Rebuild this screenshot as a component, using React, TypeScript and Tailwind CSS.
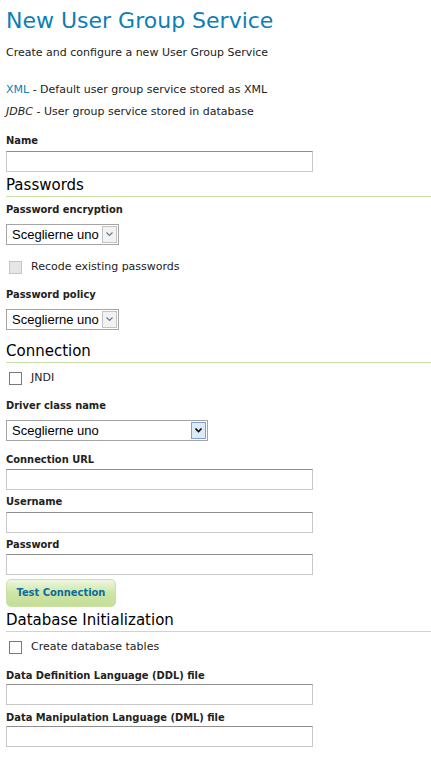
import React from "react";

const font = "font-['DejaVu_Sans',sans-serif]";
const boldFont = "font-['DejaVu_Sans_Condensed','Liberation_Sans',sans-serif]";

const Label = ({ children, className = "" }: { children: React.ReactNode; className?: string }) => (
  <div className={`text-[11px] font-bold text-[#222] leading-[14px] ${boldFont} ${className}`}>{children}</div>
);

const TextInput = ({ className = "" }: { className?: string }) => (
  <div className={`w-[307px] h-[21px] border border-[#c8c8c8] border-t-[#8e8e8e] bg-white ${className}`} />
);

const Select = ({ wide = false, className = "" }: { wide?: boolean; className?: string }) => (
  <div
    className={`flex items-stretch h-[21px] border border-[#a5a5a5] bg-white ${
      wide ? "w-[202px]" : "w-[113px]"
    } ${className}`}
  >
    <span className="flex-1 pl-[5px] text-[13px] leading-[19px] text-black font-['Liberation_Sans',sans-serif]">
      Sceglierne uno
    </span>
    <span
      className={`m-px w-[15px] flex items-center justify-center border ${
        wide ? "border-[#7da2ce] bg-[#dcebfc]" : "border-[#c3c3c3] bg-[#f2f2f2]"
      }`}
    >
      <svg width="7" height="5" viewBox="0 0 7 5">
        <path
          d="M0.5 0.5 L3.5 3.5 L6.5 0.5"
          fill="none"
          stroke={wide ? "#111" : "#6b7b8c"}
          strokeWidth={wide ? 1.6 : 1.2}
        />
      </svg>
    </span>
  </div>
);

const Check = ({ label, disabled = false, className = "" }: { label: string; disabled?: boolean; className?: string }) => (
  <div className={`flex items-center h-[16px] pl-[3px] ${className}`}>
    <span
      className={`w-[13px] h-[13px] border ${
        disabled ? "border-[#c6c6c6] bg-[#e6e6e6]" : "border-[#7a7a7a] bg-white"
      }`}
    />
    <span className="ml-[9px] text-[11px] leading-[16px] text-[#222]">{label}</span>
  </div>
);

const Heading = ({ children, className = "" }: { children: React.ReactNode; className?: string }) => (
  <div className={`border-b border-[#c8e0a6] pb-[2px] ${className}`}>
    <h2 className="text-[15px] leading-[18px] text-black">{children}</h2>
  </div>
);

export default function App() {
  return (
    <div className={`min-h-screen bg-white pl-[6px] pt-[7px] ${font}`}>
      <h1 className="text-[22px] leading-[28px] text-[#0b7fb6]">New User Group Service</h1>
      <p className="mt-[11px] text-[11px] leading-[14px] text-[#222]">
        Create and configure a new User Group Service
      </p>

      <div className="mt-[19px] text-[11px] text-[#222] leading-[22px]">
        <div>
          <span className="text-[#0b7fb6]">XML</span> - Default user group service stored as XML
        </div>
        <div>
          <span className="italic">JDBC</span> - User group service stored in database
        </div>
      </div>

      <Label className="mt-[11px]">Name</Label>
      <TextInput className="mt-[3px]" />

      <Heading className="mt-[4px]">Passwords</Heading>

      <Label className="mt-[6px]">Password encryption</Label>
      <Select className="mt-[7px]" />
      <Check className="mt-[14px]" label="Recode existing passwords" disabled />

      <Label className="mt-[13px]">Password policy</Label>
      <Select className="mt-[7px]" />

      <Heading className="mt-[12px]">Connection</Heading>
      <Check className="mt-[7px]" label="JNDI" />

      <Label className="mt-[13px]">Driver class name</Label>
      <Select className="mt-[7px]" wide />

      <Label className="mt-[12px]">Connection URL</Label>
      <TextInput className="mt-[2px]" />
      <Label className="mt-[5px]">Username</Label>
      <TextInput className="mt-[3px]" />
      <Label className="mt-[5px]">Password</Label>
      <TextInput className="mt-[2px]" />

      <button
        className={`mt-[4px] block w-[110px] h-[28px] rounded-[5px] border border-[#c9e2a4] bg-gradient-to-b from-[#eef7df] via-[#cde5a6] to-[#c4df98] text-[11px] font-bold text-[#0d6c9f] ${boldFont}`}
      >
        Test Connection
      </button>

      <Heading className="mt-[4px]">Database Initialization</Heading>
      <Check className="mt-[7px]" label="Create database tables" />

      <Label className="mt-[14px]">Data Definition Language (DDL) file</Label>
      <TextInput className="mt-[1px]" />
      <Label className="mt-[6px]">Data Manipulation Language (DML) file</Label>
      <TextInput className="mt-[1px]" />
    </div>
  );
}
